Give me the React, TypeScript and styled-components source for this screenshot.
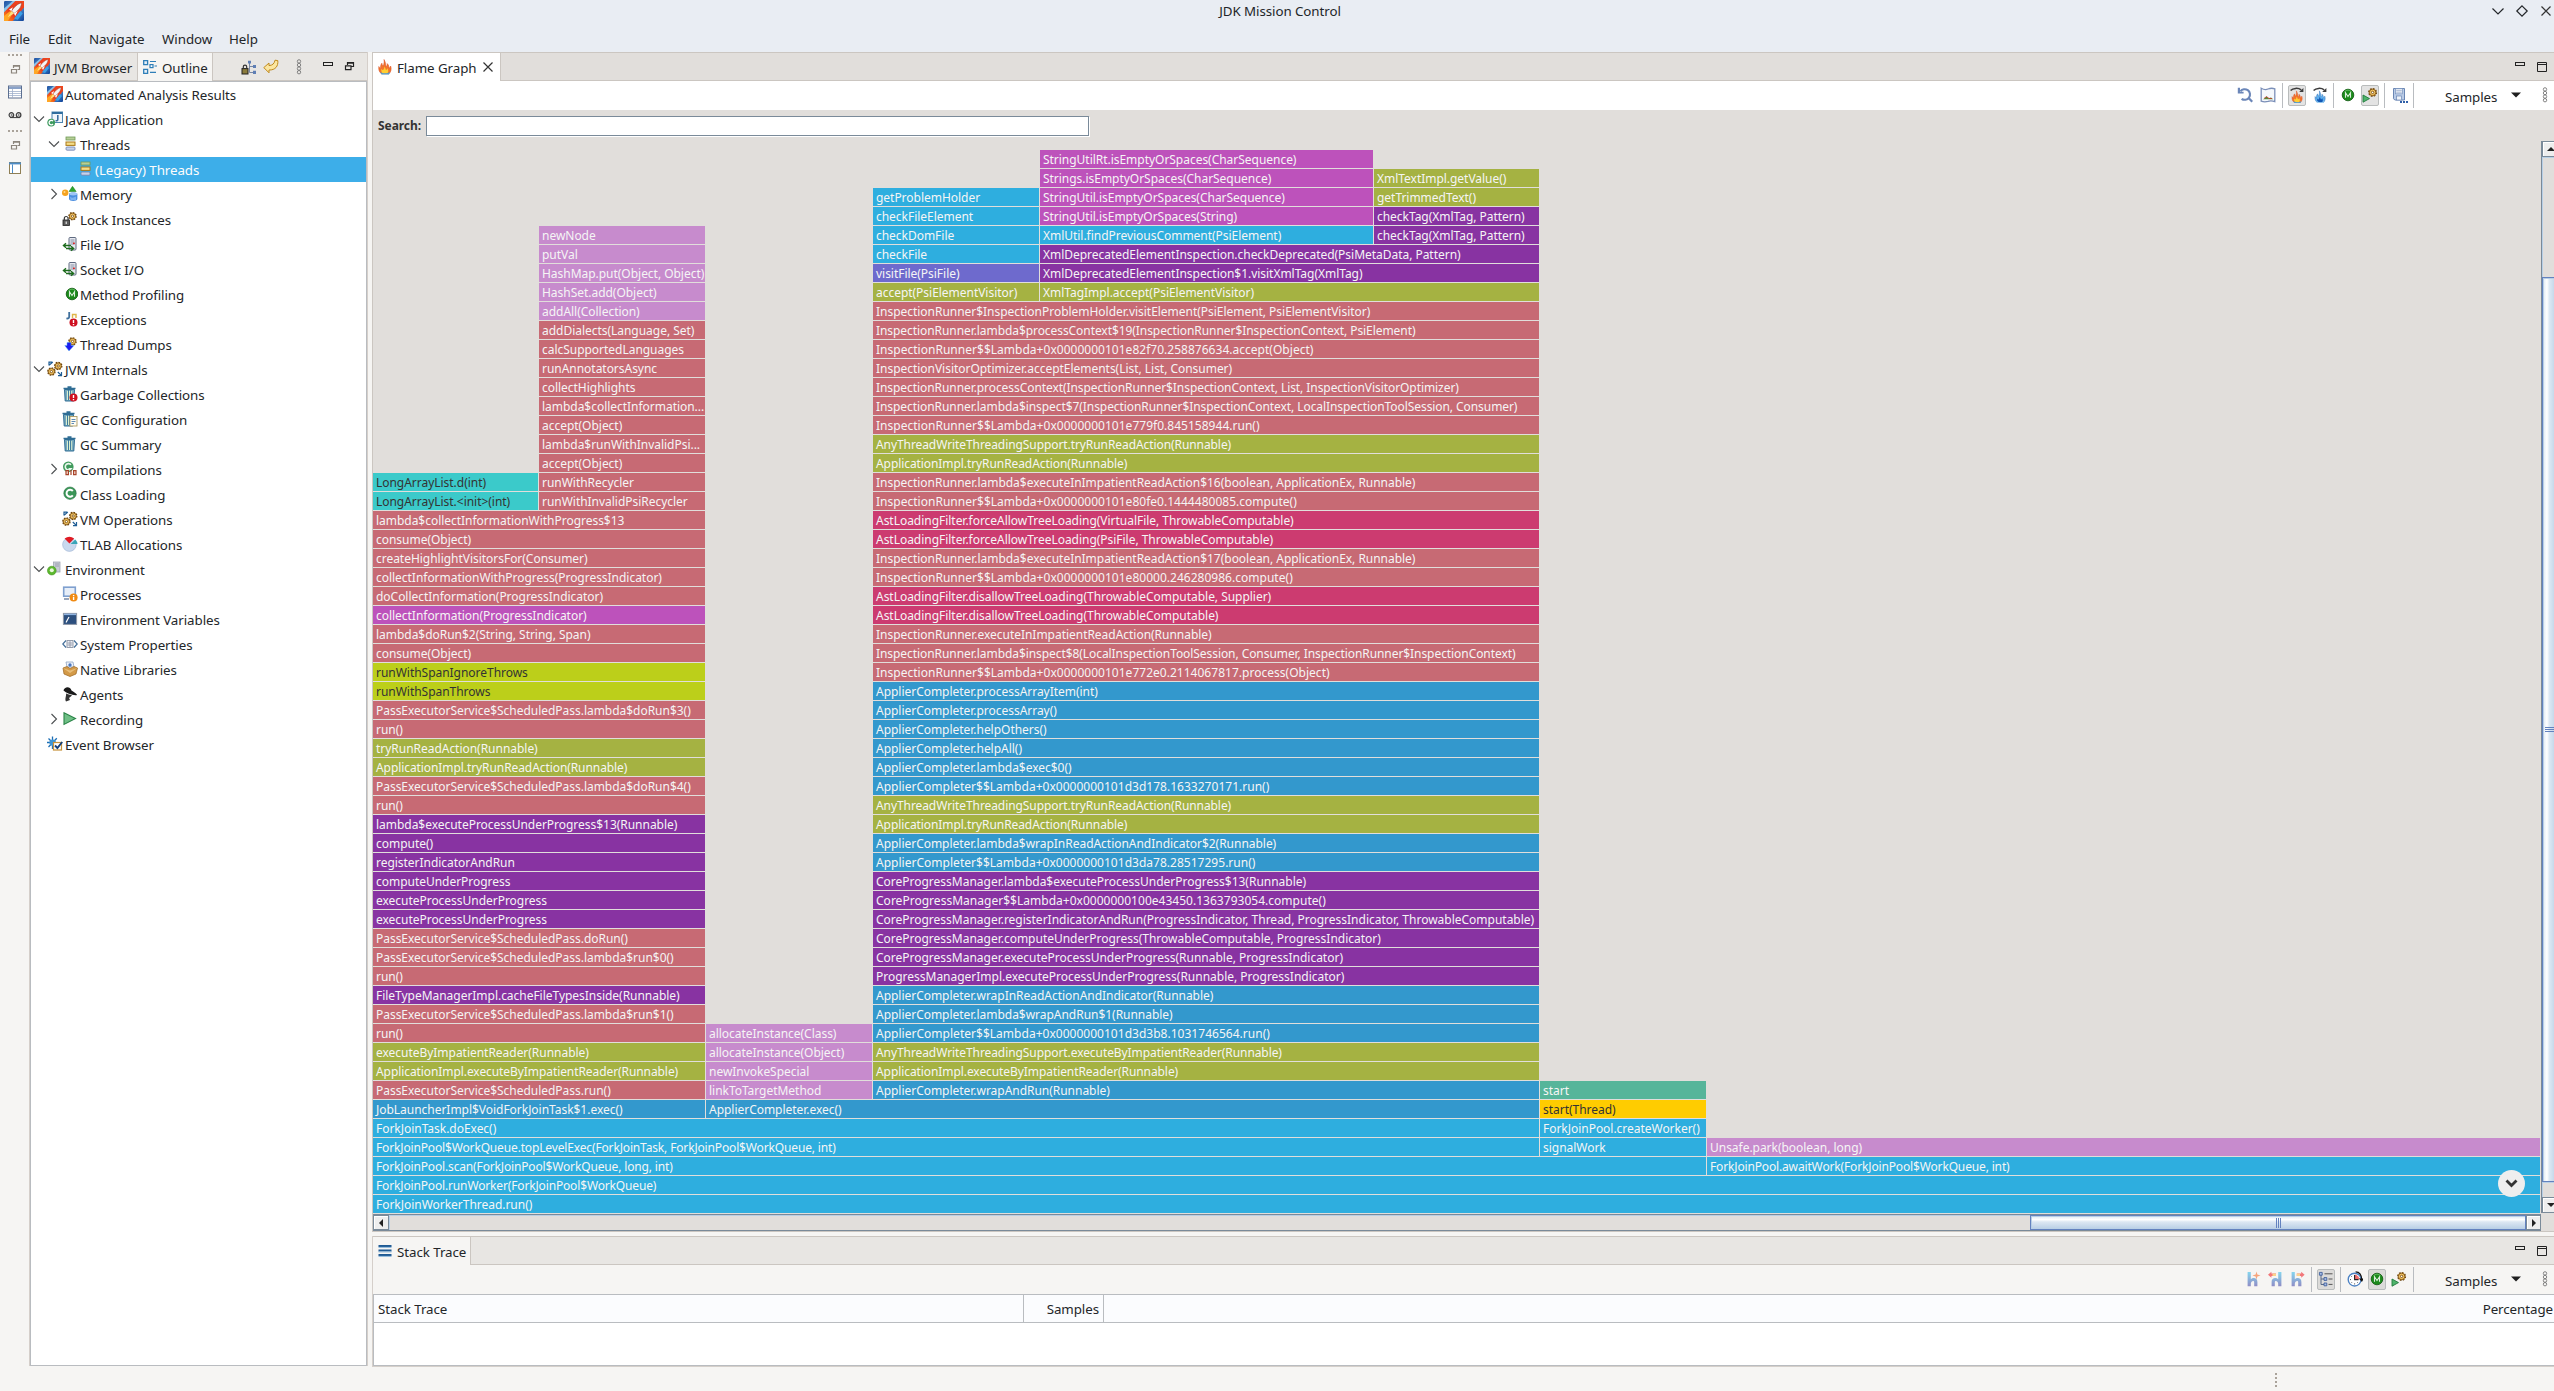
import React from "react";
import styled, { createGlobalStyle } from "styled-components";

const GlobalStyle = createGlobalStyle`
  * { box-sizing: border-box; }
  html, body { margin: 0; padding: 0; overflow: hidden; background: #f6f5f3; }
  body { font-family: "Noto Sans", "Open Sans", sans-serif; font-size: 13.33px; letter-spacing: -0.06px; color: #232629; }
`;

/* ---------- icons ---------- */

const Rocket = () => (
  <>
    <defs>
      <linearGradient id="sky" x1="0" y1="0" x2="1" y2="1">
        <stop offset="0" stopColor="#1d4fa0" />
        <stop offset="0.5" stopColor="#5aa0dc" />
        <stop offset="1" stopColor="#0d3f96" />
      </linearGradient>
      <linearGradient id="blaze" x1="1" y1="0" x2="0" y2="1">
        <stop offset="0" stopColor="#f0481e" />
        <stop offset="0.6" stopColor="#e8381c" />
        <stop offset="1" stopColor="#ff9c1c" />
      </linearGradient>
    </defs>
    <rect x="0" y="0" width="16" height="16" rx="1" fill="url(#sky)" />
    <path d="M7 0H16V5L10 13L7 16H0V9Z" fill="url(#blaze)" />
    <path d="M0 6L7 0H9L0 9Z" fill="#8cc4ea" />
    <path d="M0 12L5 8L7 10L3 16H0Z" fill="#ffa726" />
    <path d="M8 14L13 8L15 10L11 15Z" fill="#3aa0e8" />
    <path d="M14 1.5C11 2 8 5 6 8L8 10C11 8 14 5 14 1.5Z" fill="#f4f4f4" stroke="#8a3a30" strokeWidth="0.4" />
    <path d="M4 7L7 5L6 8ZM9 12L11 8L8 10Z" fill="#fff" />
    <path d="M6 8L8 10L3 13Z" fill="#ffe082" />
  </>
);

const Gear = ({ x, y, s = 1 }: { x: number; y: number; s?: number }) => (
  <g transform={`translate(${x} ${y}) scale(${s})`}>
    <circle r="3.6" fill="#f0b848" stroke="#6b430d" strokeWidth="1.8" strokeDasharray="1.6 1.2" />
    <circle r="3.2" fill="#f5c866" stroke="#7a4d10" strokeWidth="0.8" />
    <circle r="1.2" fill="#fff" stroke="#7a4d10" strokeWidth="0.9" />
  </g>
);

const Bin = ({ x = 0 }: { x?: number }) => (
  <g transform={`translate(${x} 0)`}>
    <path d="M2.5 3.5H12.5L11.8 15H3.2Z" fill="#77a9bd" stroke="#2f6d94" />
    <path d="M5.5 5V14M7.5 5V14M9.6 5V14" stroke="#d9efd0" strokeWidth="1" />
    <path d="M6.5 4V14M8.6 4V14" stroke="#2f6d94" strokeWidth="0.8" />
    <path d="M1.5 2.5H13.5M5.5 1H9.5" stroke="#2f6d94" strokeWidth="1.5" />
  </g>
);

const Alert = () => (
  <>
    <circle cx="11.5" cy="11.5" r="4" fill="#cf1020" />
    <path d="M11.5 9V12M11.5 13V14.2" stroke="#fff" strokeWidth="1.4" />
  </>
);

const Stack = () => (
  <>
    <rect x="4" y="1" width="9" height="3" fill="#b7cf97" stroke="#6f9a57" strokeWidth="0.8" />
    <rect x="4" y="6" width="9" height="3.4" fill="#f4dc86" stroke="#a9791a" strokeWidth="1" />
    <rect x="4" y="11" width="9" height="3.2" rx="1" fill="#c6d2ea" stroke="#6c80ae" strokeWidth="0.8" />
  </>
);

const GreenM = ({ cx = 8 }: { cx?: number }) => (
  <>
    <circle cx={cx} cy="8" r="5.8" fill="#1b8a1b" stroke="#0d560d" strokeWidth="0.8" />
    <path d={`M${cx - 3.5} 4.8A4.6 4.6 0 0 1 ${cx + 3.5} 4.8`} stroke="#58b858" strokeWidth="1" fill="none" />
    <path d={`M${cx - 2.5} 10.8V5.8L${cx} 9.6L${cx + 2.5} 5.8V10.8`} stroke="#dcefdc" strokeWidth="1.1" fill="none" />
  </>
);

const Server = () => (
  <>
    <rect x="7" y="1.5" width="7" height="12.5" rx="1" fill="#e6e8ef" stroke="#5f6a80" />
    <path d="M8.5 4H12.5M8.5 6H12.5M8.5 8H12.5" stroke="#7d879d" strokeWidth="0.9" />
    <rect x="11" y="6.6" width="1.8" height="1.5" fill="#e02020" />
    <path d="M1.5 9.5H9M4 7.2L1.4 9.5L4 11.8" stroke="#1d6b1d" strokeWidth="1.3" fill="none" />
    <path d="M4 12.5H11.5M9 10.2L11.7 12.5L9 14.8" stroke="#1d6b1d" strokeWidth="1.3" fill="none" />
  </>
);

const Flame = ({ cool = false }: { cool?: boolean }) => (
  <>
    <path
      d="M7 0.5C9 4 8.4 5.5 9.2 7.5C10.2 6.8 10.4 5.6 10.2 4.6C12 6.3 11.8 7.8 12.1 9C13 8.6 13.4 8 13.6 7C14.8 9.5 14 13 12 14.8H4.6C2.2 13.5 1.4 10.5 1.8 7.5C2.4 8.6 2.9 9.2 3.6 9.4C3.4 7 3.8 5.4 4.9 4.2C5 5.4 5.4 6.4 6.2 7.1C7 5 7.4 3 7 0.5Z"
      fill={cool ? "#5fb0ee" : "#f2742c"}
      stroke={cool ? "#1f62b0" : "#d9481c"}
      strokeWidth="0.5"
    />
    <path
      d="M7.4 7.5C8.4 9 8.6 10.3 9 11.2C9.8 10.6 10.2 10 10.3 9.2C11.8 11 11.4 13.3 10.3 14.6H5.8C4.2 13.3 4 11 4.6 9.8C5 10.6 5.4 11 6 11.2C7 10 7.4 8.8 7.4 7.5Z"
      fill={cool ? "#1257b4" : "#ffcf33"}
    />
    <path d="M3.2 13C5.5 14.8 10.8 14.8 13 12.8L12 15.4H4.6Z" fill={cool ? "#9fd0f2" : "#4fa0d4"} />
  </>
);

const SmallFlame = ({ cool = false }: { cool?: boolean }) => (
  <g transform="translate(1.6 3.4) scale(0.82)">
    <Flame cool={cool} />
  </g>
);

const FlipArrow = () => (
  <>
    <path d="M1.6 3.6C4 1 9 0.6 12.2 2.8" stroke="#3b3b3b" strokeWidth="1.5" fill="none" />
    <path d="M14.4 1V5H10.2Z" fill="#3b3b3b" />
  </>
);

const Play = () => <path d="M1 8L7.5 11.6L1 15.2Z" fill="#4fb46c" stroke="#217a3c" strokeWidth="0.9" />;

const Branch = ({ flip = false }: { flip?: boolean }) => (
  <g transform={flip ? "translate(16 0) scale(-1 1)" : undefined}>
    <defs>
      <linearGradient id="branchFill" x1="0" y1="0" x2="0" y2="1">
        <stop offset="0" stopColor="#86d6ee" />
        <stop offset="1" stopColor="#8f8dc6" />
      </linearGradient>
    </defs>
    <path d="M1.6 1H4.8V8.2C6.5 6.5 11.4 6 11.4 11V15.2H8.2V11.5C8.2 8.8 4.8 10 4.8 13V15.2H1.6Z" fill="url(#branchFill)" />
  </g>
);

const icons: Record<string, React.ReactNode> = {
  rocket: <Rocket />,
  javaApp: (
    <>
      <rect x="5" y="1" width="10.5" height="10.5" fill="#f0f5fa" stroke="#4d86b0" />
      <path d="M5 2H15.5" stroke="#2f6d9e" strokeWidth="2" />
      <path d="M10.8 4V8.5Q10.8 10 8.5 9.8" stroke="#3b6fa0" strokeWidth="1.6" fill="none" />
      <circle cx="4.2" cy="11.6" r="3.9" fill="#3d9a5f" />
      <path d="M6 10.2A2.2 2.2 0 1 0 6 13" stroke="#fff" strokeWidth="1.3" fill="none" />
    </>
  ),
  threads: <Stack />,
  memory: (
    <>
      <circle cx="3.2" cy="6.8" r="3.2" fill="#f5a31f" />
      <circle cx="2.5" cy="6" r="1" fill="#ffd890" />
      <path d="M10.5 0.3L14.2 5.5H7Z" fill="#2fa52f" stroke="#1a7a1a" strokeWidth="0.5" />
      <path d="M7 8C7 6 15.4 6 15.4 8V13C15.4 15.6 7 15.6 7 13Z" fill="#4b8ee0" />
      <ellipse cx="11.2" cy="8" rx="4" ry="1.4" fill="#9fc6f5" />
      <path d="M8 10.5C10 12.5 12 11.5 14 10.5V14H8.5Z" fill="#7db3f0" />
    </>
  ),
  lock: (
    <>
      <Gear x={10.5} y={5.2} s={0.95} />
      <rect x="1" y="9" width="6.5" height="5.5" fill="#5b5b5b" stroke="#222" strokeWidth="0.8" />
      <path d="M2.3 9V7.4A1.9 1.9 0 0 1 6.1 7.4V9" stroke="#333" strokeWidth="1.2" fill="none" />
      <path d="M4.2 10.5V13" stroke="#fff" />
    </>
  ),
  io: <Server />,
  method: <GreenM cx={10} />,
  exception: (
    <>
      <path d="M7.2 1V5.5Q7.2 8 4.4 7.4" stroke="#3f6f9c" strokeWidth="1.8" fill="none" />
      <path d="M10.5 7V3.5H14V7" stroke="#dfb64a" strokeWidth="1.4" fill="none" />
      <Alert />
    </>
  ),
  dump: (
    <>
      <Gear x={10.5} y={5.4} s={0.95} />
      <path d="M5 6.5H9V9.5H12L7 15L2.8 9.5H5Z" fill="#1c1cf0" stroke="#5ab0f0" strokeWidth="0.5" />
    </>
  ),
  gears: (
    <>
      <Gear x={11.2} y={5} s={0.95} />
      <Gear x={4.4} y={10.6} s={0.95} />
      <path d="M5.5 1.2H2V4.6M2 4.4L5.8 1M14.5 11V14.6H11M14.3 14.4L10.8 11" stroke="#1f5d95" strokeWidth="1.2" fill="none" />
    </>
  ),
  gc: (
    <>
      <Bin />
      <Alert />
    </>
  ),
  gcConf: (
    <>
      <Bin x={-1} />
      <rect x="8" y="5.5" width="7" height="9.5" fill="#fffdf2" stroke="#b09a60" strokeWidth="0.9" />
      <path d="M9.5 8.5H13.5M9.5 10.5H13.5M9.5 12.5H12" stroke="#5f89b5" />
    </>
  ),
  gcSum: <Bin />,
  compile: (
    <>
      <circle cx="6.3" cy="5.8" r="5.3" fill="#3f9a5c" />
      <path d="M9 3.8A3.2 3.2 0 1 0 9 7.8H6.5" stroke="#e9f6ec" strokeWidth="1.6" fill="none" />
      <path d="M4 9.6H6.4V13.6H4ZM9 9V14M11.6 9.6H14V13.6H11.6Z" stroke="#a8442a" strokeWidth="1.2" fill="#f6e2d8" />
    </>
  ),
  klass: (
    <>
      <circle cx="8" cy="7.2" r="6.2" fill="#3b9658" stroke="#2a7443" strokeWidth="0.6" />
      <path d="M10.8 5A3.5 3.5 0 1 0 10.8 9.4" stroke="#fff" strokeWidth="2" fill="none" />
    </>
  ),
  pie: (
    <>
      <circle cx="7.4" cy="8.6" r="6.8" fill="#c9d9ee" stroke="#9fb4d3" strokeWidth="0.6" />
      <path d="M7.4 7.6L2.6 2.6Q7.4 -1 12.2 2.6Z" fill="#e01b24" />
      <path d="M8.6 8L13.4 3.4Q15.5 5.8 15.6 8Z" fill="#3aa6b8" />
    </>
  ),
  env: (
    <>
      <rect x="6.5" y="1" width="6.5" height="10" fill="#c8ccd6" stroke="#a0a6b4" strokeWidth="0.8" />
      <path d="M8 3H12M8 5H12" stroke="#8f95a5" strokeWidth="0.8" />
      <circle cx="4.8" cy="9.6" r="4.4" fill="#5cb82e" stroke="#3c8a1b" strokeWidth="0.5" />
      <circle cx="4.8" cy="9.2" r="2" fill="#e9f8dd" />
    </>
  ),
  proc: (
    <>
      <rect x="1.7" y="1.2" width="11.6" height="9" fill="#e7eef8" stroke="#7fa0cf" strokeWidth="1.6" />
      <path d="M2 13H7" stroke="#7f8faa" strokeWidth="1.6" />
      <circle cx="11.6" cy="11.5" r="4" fill="#f08a12" />
      <path d="M11.6 9V10.2M11.6 11V14" stroke="#fff" strokeWidth="1.4" />
    </>
  ),
  term: (
    <>
      <rect x="1.4" y="2.4" width="13.2" height="11" fill="#2c4f7e" stroke="#8f98a8" />
      <path d="M2 3.4H14" stroke="#8fb3e0" strokeWidth="1.4" />
      <path d="M4 11.5L7 6" stroke="#fff" strokeWidth="1.2" />
    </>
  ),
  props: (
    <>
      <path d="M4 4.5L0.8 8L4 11.5M12 4.5L15.2 8L12 11.5" stroke="#46709a" strokeWidth="1.2" fill="none" />
      <rect x="5" y="4.5" width="6" height="7" fill="#eef1f6" stroke="#8a93a3" strokeWidth="0.9" />
      <path d="M8 5V11M5.5 7H10.5M5.5 9H10.5" stroke="#8a93a3" strokeWidth="0.8" />
    </>
  ),
  libs: (
    <>
      <path d="M4 1H11L12 6H5Z" fill="#f0f4fb" stroke="#8ea3c2" strokeWidth="0.8" />
      <circle cx="8" cy="4" r="1.7" fill="#4b78c0" />
      <path d="M1 7L5 5.5L8 7.5L12 5.5L15.5 7L14 13L8 15.5L2 13Z" fill="#d39a48" stroke="#9c6620" strokeWidth="0.7" />
      <path d="M1 7L8 9.5L15.5 7L8 12Z" fill="#e8bd78" />
    </>
  ),
  spy: (
    <>
      <path d="M1.5 4.5C2 1 8 -0.5 9.5 4.5C13 6.5 15 8 15 9C12 10 4 7 1.5 4.5Z" fill="#1a1a1a" />
      <path d="M4 7.5C7 8.5 9 9 10 9.5L7 12L8 14L4 15.5C2.5 12.5 4.5 10.5 4 7.5Z" fill="#333" />
    </>
  ),
  play: <path d="M2 1.8L13.5 7.6L2 13.4Z" fill="#6fbf86" stroke="#2a8447" strokeWidth="1.1" />,
  event: (
    <>
      <path d="M5.5 0.5V13M0 6.5H9M1.5 2.5L9.5 10.5M9.8 2.2L1.5 11" stroke="#1e6fb5" strokeWidth="1.3" />
      <circle cx="5.6" cy="6.6" r="3.2" fill="#3d95d6" />
      <rect x="6.5" y="6.5" width="8" height="7.5" fill="#fff" stroke="#c7923a" strokeWidth="1.2" />
      <path d="M8 9.5L10.4 12L15.2 6" stroke="#153f7a" strokeWidth="1.9" fill="none" />
    </>
  ),
  outline: (
    <>
      <path d="M1.7 1.7H5.6V5.6H1.7ZM1.7 10.4H5.6V14.3H1.7Z" fill="#e6f0f8" stroke="#2f7fb8" strokeWidth="1.3" />
      <path d="M8 2.5H14M8 13.4H14M12.5 7H15" stroke="#2f7fb8" strokeWidth="1.2" />
      <rect x="8" y="5.6" width="3" height="3" fill="#fff" stroke="#2f7fb8" strokeWidth="1.2" />
    </>
  ),
  lockTree: (
    <>
      <path d="M8.5 2V12.5H12M8.5 6.5H12" stroke="#7787a5" strokeWidth="1" fill="none" />
      <path d="M7 0.8H10V3.4H7ZM12 5H15V8H12ZM12 10.8H15V14H12Z" fill="#5f7fb5" />
      <rect x="1" y="8.6" width="6" height="5.4" fill="#8a7b3c" stroke="#222" strokeWidth="1" />
      <path d="M2.3 8.4V6.8A1.7 1.7 0 0 1 5.7 6.8V8.4" stroke="#333" strokeWidth="1.2" fill="none" />
    </>
  ),
  back: (
    <path
      d="M0.8 8.6L6 4V6.6C9.5 6.4 11.4 4.6 12 1.2L14.8 1.6C15.4 7 12.5 11.2 6 11V13.8Z"
      fill="#fbe6a0"
      stroke="#c08a1c"
      strokeWidth="1"
    />
  ),
  dots: (
    <g fill="none" stroke="#777" strokeWidth="0.9">
      <circle cx="8" cy="2.4" r="1.7" />
      <circle cx="8" cy="6" r="1.7" />
      <circle cx="8" cy="9.6" r="1.7" />
      <circle cx="8" cy="13.2" r="1.7" />
    </g>
  ),
  min: <rect x="3.5" y="3.5" width="9" height="3" fill="none" stroke="#222" />,
  max: <path d="M3.5 3.5H12.5V12.5H3.5ZM3.5 5.5H12.5" fill="none" stroke="#222" />,
  restore: <path d="M6.5 6V3.5H12.5V7.5H10.5M6.5 4.2H12.5M4.5 6.8H10V10.6H4.5Z" fill="none" stroke="#222" strokeWidth="1.2" />,
  restoreDim: <path d="M6.5 6V3.5H12.5V7.5H10.5M6.5 4.2H12.5M4.5 7.5H9.5V11H4.5Z" fill="none" stroke="#8c857c" strokeWidth="1.2" />,
  tableView: (
    <>
      <rect x="1.5" y="2" width="13" height="12" fill="#fff" stroke="#5c6f90" />
      <path d="M2 3.8H14" stroke="#8aa2c8" strokeWidth="2.4" />
      <path d="M5.5 5V14M2 7.5H14M2 9.5H14M2 11.5H14" stroke="#9fb0cc" strokeWidth="0.8" />
    </>
  ),
  glasses: (
    <>
      <circle cx="4.4" cy="8" r="2.3" fill="#ddd" stroke="#3d3d3d" strokeWidth="1.2" />
      <circle cx="11.6" cy="8" r="2.3" fill="#ddd" stroke="#3d3d3d" strokeWidth="1.2" />
      <path d="M3 10.6H13" stroke="#3d3d3d" />
      <path d="M4 8H5.4M11 8H12.4" stroke="#3d3d3d" />
    </>
  ),
  sideView: (
    <>
      <rect x="2.5" y="2.5" width="11" height="11" fill="#fff" stroke="#8f7f55" />
      <path d="M2 3.4H14" stroke="#4d8cc6" strokeWidth="2" />
      <path d="M5.5 4.4V13" stroke="#4d8cc6" />
    </>
  ),
  flame: <Flame />,
  undo: (
    <>
      <path d="M3.4 4.4A5.3 5.3 0 1 1 4.6 11.8" stroke="#6b86b8" strokeWidth="2.1" fill="none" />
      <path d="M0.8 0.8V6.6H6.6V4.8H3V0.8Z" fill="#6b86b8" />
      <path d="M11.4 10.8L15.2 14.8" stroke="#6b86b8" strokeWidth="2.2" />
    </>
  ),
  map: (
    <>
      <path d="M1.2 1.2Q5 3.4 8 2Q11.5 0.6 14.8 1.8V14.6Q11 13.2 8 14.4Q4.5 15.4 1.2 14.2Z" fill="#f5f8fc" stroke="#7b8fb8" strokeWidth="1.3" />
      <path d="M3 12.2H13.2L11 10.6L8.5 11.2L6.5 9.4L5 11Z" fill="#4f8a3c" />
      <path d="M4 11.5L6.5 9.6L9 11.5H12" stroke="#c0442a" strokeWidth="0.9" fill="none" />
    </>
  ),
  flameUp: (
    <>
      <SmallFlame />
      <FlipArrow />
    </>
  ),
  flameDown: (
    <>
      <SmallFlame cool />
      <FlipArrow />
    </>
  ),
  greenM: <GreenM />,
  playGear: (
    <>
      <Play />
      <Gear x={10.6} y={5.4} s={1} />
    </>
  ),
  save: (
    <>
      <path d="M1.5 1.5H12.5V13H2.8L1.5 11.7Z" fill="#b9cbe6" stroke="#6a86b4" />
      <rect x="3.6" y="1.8" width="6.8" height="5" fill="#f3f6fb" stroke="#7b95bf" strokeWidth="0.7" />
      <path d="M4.2 3.6H9.8M4.2 5.2H9.8" stroke="#8fa3c4" strokeWidth="0.7" />
      <rect x="4.6" y="9" width="5" height="4" fill="#eef2f8" stroke="#6a86b4" strokeWidth="0.7" />
      <path d="M8 15H10M11 15H13M14 15H16" stroke="#2f5fa8" strokeWidth="1.8" />
    </>
  ),
  branchNew: (
    <>
      <Branch />
      <path d="M10.5 0.5L11.4 3.6L14.6 4.5L11.4 5.4L10.5 8.5L9.6 5.4L6.4 4.5L9.6 3.6Z" fill="#f7a57c" />
    </>
  ),
  branchLeft: (
    <>
      <Branch flip />
      <path d="M1 3.8L4.4 0.8V2.6H9V5H4.4V6.8Z" fill="#f2777a" />
      <path d="M5.5 2.6H9V5H5.5Z" fill="#fbd38a" />
    </>
  ),
  branchRight: (
    <>
      <Branch />
      <path d="M14.6 3.8L11.2 0.8V2.6H6.8V5H11.2V6.8Z" fill="#f2777a" />
      <path d="M6.8 2.6H10V5H6.8Z" fill="#fbd38a" />
    </>
  ),
  treeView: (
    <>
      <path d="M3 4V13.5H6M3 8H6" stroke="#5b6b88" fill="none" />
      <path d="M1.4 1.4H4.2V4.2H1.4ZM6 6.6H8.8V9.4H6ZM6 12H8.8V14.8H6Z" fill="#aac0e6" stroke="#3f5f9c" strokeWidth="0.9" />
      <path d="M6.5 2.8H14.5M10.5 8H14.5M10.5 13.4H14.5" stroke="#555" strokeWidth="1" />
    </>
  ),
  clock: (
    <>
      <circle cx="7.6" cy="8.6" r="6.4" fill="#fff" stroke="#4c82c4" strokeWidth="1.4" />
      <path d="M7.6 8.6V3.6A5 5 0 0 1 12.4 8.6Z" fill="#f26a6a" />
      <path d="M7.6 4V8.6H11.5" stroke="#222" strokeWidth="1.1" fill="none" />
      <path d="M7.6 13.4V12.4M3 8.6H4M4.4 5.4L5 6M4.4 11.8L5 11.2M10.8 11.8L10.2 11.2" stroke="#333" strokeWidth="0.9" />
      <path d="M8.6 0.8C12.5 0.8 14.6 4 14.8 9M12.6 7.4L14.8 10L16 7.6" stroke="#111" strokeWidth="1.2" fill="none" />
    </>
  ),
  lines: (
    <>
      <path d="M1.5 3H14.5M1.5 7.5H14.5M1.5 12H14.5" stroke="#1f5a94" strokeWidth="1.8" />
      <path d="M1.5 4.4H14.5M1.5 8.9H14.5M1.5 13.4H14.5" stroke="#8fb8da" strokeWidth="1" />
    </>
  ),
  caret: <path d="M3 5.5H13L8 10.6Z" fill="#1f1f1f" />,
  close: <path d="M3.5 3.5L12.5 12.5M12.5 3.5L3.5 12.5" stroke="#333" strokeWidth="1.2" fill="none" />,
  chevDown: <path d="M2.5 5.5L8 11L13.5 5.5" stroke="#232629" strokeWidth="1.2" fill="none" />,
  diamond: <path d="M8 2.8L13.2 8L8 13.2L2.8 8Z" stroke="#232629" strokeWidth="1.2" fill="none" />,
  open: <path d="M3 5.5L8 10.5L13 5.5" stroke="#4d5052" strokeWidth="1.1" fill="none" />,
  closed: <path d="M5.5 3L10.5 8L5.5 13" stroke="#4d5052" strokeWidth="1.1" fill="none" />,
};

const Svg = styled.svg`
  display: block;
  flex: none;
`;

const Icon = ({ name, size = 16 }: { name: string; size?: number }) => (
  <Svg width={size} height={size} viewBox="0 0 16 16">
    {icons[name]}
  </Svg>
);

/* ---------- window chrome ---------- */

const Window = styled.div`
  width: 2554px;
  height: 1391px;
  display: flex;
  flex-direction: column;
  overflow: hidden;
  background: #f6f5f3;
  white-space: nowrap;
`;

const TitleBar = styled.header`
  height: 25px;
  display: grid;
  grid-template-columns: 1fr auto 1fr;
  align-items: center;
  padding: 0 0 3px 4px;
  background: #e9edf3;
`;

const Title = styled.div`
  line-height: 20px;
  padding-left: 2px;
`;

const WindowButtons = styled.div`
  display: flex;
  justify-content: flex-end;
  gap: 8px;
`;

const MenuBar = styled.nav`
  height: 27px;
  display: flex;
  align-items: center;
  padding: 0 0 0 9px;
  background: #e9edf3;
`;

const MenuItem = styled.span<{ $w: number }>`
  width: ${(p) => p.$w}px;
  line-height: 26px;
`;

const Body = styled.div`
  flex: 1;
  display: flex;
  min-height: 0;
`;

const Rail = styled.aside`
  width: 29px;
  display: flex;
  flex-direction: column;
  align-items: center;
`;

const RailItem = styled.div<{ $mt?: number }>`
  margin-top: ${(p) => p.$mt ?? 0}px;
  padding-left: 1px;
`;

const Grip = styled.div<{ $mt: number }>`
  width: 14px;
  height: 2px;
  margin-top: ${(p) => p.$mt}px;
  background: repeating-linear-gradient(90deg, #aaa39a 0 2px, transparent 2px 4px);
`;

const Strip = styled.div<{ $bg: string }>`
  height: 29px;
  display: flex;
  background: ${(p) => p.$bg};
  border-top: 1px solid #cbc6c1;
  border-bottom: 1px solid #cbc6c1;
`;

const Tab = styled.div<{ $w: number; $bg?: string; $active?: boolean }>`
  width: ${(p) => p.$w}px;
  height: ${(p) => (p.$active ? 28 : 27)}px;
  flex: none;
  display: flex;
  align-items: center;
  gap: 4px;
  padding: 0 0 1px 4px;
  background: ${(p) => p.$bg ?? "transparent"};
  border-right: 1px solid #cbc6c1;
`;

const TabText = styled.span`
  line-height: 18px;
  padding-top: 3px;
`;

const StripTools = styled.div<{ $pr: number }>`
  margin-left: auto;
  display: flex;
  padding: 6px ${(p) => p.$pr}px 0 0;
`;

const Slot = styled.div<{ $ml?: number; $w?: number; $dy?: number }>`
  margin-left: ${(p) => p.$ml ?? 0}px;
  width: ${(p) => p.$w ?? 16}px;
  padding-top: ${(p) => p.$dy ?? 0}px;
  flex: none;
`;

/* ---------- outline tree ---------- */

const SidePanel = styled.section`
  width: 339px;
  height: 1314px;
  display: flex;
  flex-direction: column;
  border: solid #d5cfca;
  border-width: 0 1px;
`;

const Tree = styled.div`
  flex: 1;
  background: #fff;
  border: 1px solid #b9bcc0;
`;

const TreeRow = styled.div<{ $depth: number; $selected?: boolean }>`
  height: 25px;
  display: flex;
  align-items: center;
  padding: 0 0 1px ${(p) => p.$depth * 15}px;
  background: ${(p) => (p.$selected ? "#3daee9" : "transparent")};
  color: ${(p) => (p.$selected ? "#fcfcfc" : "#232629")};
`;

const Twisty = styled.span`
  width: 16px;
  height: 16px;
`;

const TreeLabel = styled.span`
  margin-left: 2px;
  line-height: 22px;
  padding-top: 2px;
`;

type TreeItem = [depth: number, icon: string, label: string, state?: "open" | "closed" | "selected"];

const treeItems: TreeItem[] = [
  [0, "rocket", "Automated Analysis Results"],
  [0, "javaApp", "Java Application", "open"],
  [1, "threads", "Threads", "open"],
  [2, "threads", "(Legacy) Threads", "selected"],
  [1, "memory", "Memory", "closed"],
  [1, "lock", "Lock Instances"],
  [1, "io", "File I/O"],
  [1, "io", "Socket I/O"],
  [1, "method", "Method Profiling"],
  [1, "exception", "Exceptions"],
  [1, "dump", "Thread Dumps"],
  [0, "gears", "JVM Internals", "open"],
  [1, "gc", "Garbage Collections"],
  [1, "gcConf", "GC Configuration"],
  [1, "gcSum", "GC Summary"],
  [1, "compile", "Compilations", "closed"],
  [1, "klass", "Class Loading"],
  [1, "gears", "VM Operations"],
  [1, "pie", "TLAB Allocations"],
  [0, "env", "Environment", "open"],
  [1, "proc", "Processes"],
  [1, "term", "Environment Variables"],
  [1, "props", "System Properties"],
  [1, "libs", "Native Libraries"],
  [1, "spy", "Agents"],
  [1, "play", "Recording", "closed"],
  [0, "event", "Event Browser"],
];

/* ---------- editor area ---------- */

const Main = styled.main`
  margin-left: 4px;
  width: 2182px;
  flex: none;
  display: flex;
  flex-direction: column;
`;

const EditorPanel = styled.section`
  height: 1180px;
  display: flex;
  flex-direction: column;
  border-left: 1px solid #cbc6c1;
  border-bottom: 1px solid #cbc6c1;
`;

const ToolBar = styled.div<{ $bg: string }>`
  height: 29px;
  display: flex;
  align-items: center;
  justify-content: flex-end;
  padding-bottom: 1px;
  background: ${(p) => p.$bg};
`;

const Sep = styled.div<{ $ml: number }>`
  width: 1px;
  height: 25px;
  margin-left: ${(p) => p.$ml}px;
  background: #b9bcc0;
`;

const ToggleButton = styled.div<{ $ml: number; $bg: string }>`
  width: 18px;
  height: 21px;
  margin-left: ${(p) => p.$ml}px;
  display: flex;
  align-items: center;
  justify-content: center;
  background: ${(p) => p.$bg};
  border: 1px solid #b9bcbc;
  border-radius: 2px;
`;

const ToolText = styled.span<{ $ml: number }>`
  width: 51px;
  margin-left: ${(p) => p.$ml}px;
  padding-top: 3px;
  line-height: 18px;
`;

const FlameView = styled.div`
  flex: 1;
  display: flex;
  flex-direction: column;
  background: #e1dedb;
  min-height: 0;
`;

const SearchRow = styled.div`
  height: 31px;
  display: flex;
  align-items: center;
  padding-left: 5px;
`;

const SearchLabel = styled.label`
  width: 48px;
  font-size: 12px;
  font-weight: 700;
  color: #333;
`;

const SearchField = styled.input`
  width: 663px;
  height: 20px;
  padding: 0;
  background: #fff;
  border: 1px solid #7a8a99;
  border-radius: 0;
  box-shadow: 1px 1px 0 #fff;
  outline: none;
`;

const ScrollPane = styled.div`
  display: grid;
  grid-template-columns: 2168px 13px;
  grid-template-rows: 1072px 17px;
  row-gap: 1px;
  overflow: hidden;
`;

const Viewport = styled.div`
  position: relative;
  padding-top: 9px;
  height: 1072px;
`;

const FlameGrid = styled.div`
  display: grid;
  grid-template-columns: 166px 167px 167px 167px 166px 168px 166px 167px 834px;
  grid-template-rows: repeat(56, 19px);
`;

const Frame = styled.div<{ $row: number; $from: number; $to: number; $bg: string; $dark?: boolean; $track: number }>`
  grid-row: ${(p) => p.$row + 1};
  grid-column: ${(p) => p.$from + 1} / ${(p) => p.$to + 1};
  margin: 0 1px 1px 0;
  padding-left: 3px;
  overflow: hidden;
  background: ${(p) => p.$bg};
  color: ${(p) => (p.$dark ? "#333333" : "#f5f5f5")};
  font-size: 12px;
  line-height: 19px;
  letter-spacing: ${(p) => p.$track}px;
`;

const ScrollHint = styled.div`
  position: absolute;
  right: 16px;
  bottom: 16px;
  width: 27px;
  height: 27px;
  border-radius: 50%;
  background: #eeeeee;
  display: flex;
  align-items: center;
  justify-content: center;
`;

const VBar = styled.div`
  display: flex;
  flex-direction: column;
  border-left: 1px solid #7a8a99;
  width: 17px;
`;

const HBar = styled.div`
  display: flex;
  border: solid #7a8a99;
  border-width: 1px 0;
`;

const ArrowButton = styled.div<{ $w: number; $h: number }>`
  flex: none;
  width: ${(p) => p.$w}px;
  height: ${(p) => p.$h}px;
  display: flex;
  align-items: center;
  justify-content: center;
  background: #eeeeee;
  border: 1px solid #7a8a99;
  box-shadow: inset 1px 1px 0 #fff;
`;

const Track = styled.div<{ $len: number; $vertical?: boolean }>`
  flex: none;
  ${(p) => (p.$vertical ? `height: ${p.$len}px` : `width: ${p.$len}px`)};
  box-shadow: inset 1px 1px 0 #b8cfe5;
`;

const Thumb = styled.div<{ $len: number; $vertical?: boolean }>`
  flex: none;
  display: flex;
  align-items: center;
  justify-content: center;
  flex-direction: ${(p) => (p.$vertical ? "column" : "row")};
  gap: 1px;
  ${(p) => (p.$vertical ? `height: ${p.$len}px` : `width: ${p.$len}px`)};
  border: 1px solid #6382bf;
  box-shadow: inset 1px 1px 0 #b8cfe5;
  background: linear-gradient(${(p) => (p.$vertical ? "90deg" : "180deg")}, #dde8f3 0%, #ffffff 28%, #dde8f3 45%, #b8cfe5 100%);
  i {
    ${(p) => (p.$vertical ? "width: 10px; height: 1px;" : "width: 1px; height: 10px;")}
    background: #6382bf;
  }
`;

const Tri = styled.svg`
  display: block;
`;

type FrameSpec = [row: number, label: string, bg: string];

const LAV = "#c78bcd";
const RED = "#c76a74";
const TEAL = "#3bcaca";
const OLIVE = "#a5b242";
const LIME = "#bccf1a";
const PURPLE = "#8833a2";
const MAG = "#bd52bb";
const PINK = "#cc3b70";
const SKY = "#2eaedf";
const BLUE = "#3398cd";
const INDIGO = "#6e6acd";
const GREEN = "#56b59a";
const YELLOW = "#ffcc00";

const run = (start: number, entries: [string, string][]): FrameSpec[] =>
  entries.map(([label, bg], i) => [start + i, label, bg]);

const columns: { from: number; to: number; frames: FrameSpec[] }[] = [
  {
    from: 0,
    to: 1,
    frames: run(17, [
      ["LongArrayList.d(int)", TEAL],
      ["LongArrayList.<init>(int)", TEAL],
    ]),
  },
  {
    from: 1,
    to: 2,
    frames: run(4, [
      ["newNode", LAV],
      ["putVal", LAV],
      ["HashMap.put(Object, Object)", LAV],
      ["HashSet.add(Object)", LAV],
      ["addAll(Collection)", LAV],
      ["addDialects(Language, Set)", RED],
      ["calcSupportedLanguages", RED],
      ["runAnnotatorsAsync", RED],
      ["collectHighlights", RED],
      ["lambda$collectInformation...", RED],
      ["accept(Object)", RED],
      ["lambda$runWithInvalidPsi...", RED],
      ["accept(Object)", RED],
      ["runWithRecycler", RED],
      ["runWithInvalidPsiRecycler", RED],
    ]),
  },
  {
    from: 0,
    to: 2,
    frames: run(19, [
      ["lambda$collectInformationWithProgress$13", RED],
      ["consume(Object)", RED],
      ["createHighlightVisitorsFor(Consumer)", RED],
      ["collectInformationWithProgress(ProgressIndicator)", RED],
      ["doCollectInformation(ProgressIndicator)", RED],
      ["collectInformation(ProgressIndicator)", MAG],
      ["lambda$doRun$2(String, String, Span)", RED],
      ["consume(Object)", RED],
      ["runWithSpanIgnoreThrows", LIME],
      ["runWithSpanThrows", LIME],
      ["PassExecutorService$ScheduledPass.lambda$doRun$3()", RED],
      ["run()", RED],
      ["tryRunReadAction(Runnable)", OLIVE],
      ["ApplicationImpl.tryRunReadAction(Runnable)", OLIVE],
      ["PassExecutorService$ScheduledPass.lambda$doRun$4()", RED],
      ["run()", RED],
      ["lambda$executeProcessUnderProgress$13(Runnable)", PURPLE],
      ["compute()", PURPLE],
      ["registerIndicatorAndRun", PURPLE],
      ["computeUnderProgress", PURPLE],
      ["executeProcessUnderProgress", PURPLE],
      ["executeProcessUnderProgress", PURPLE],
      ["PassExecutorService$ScheduledPass.doRun()", RED],
      ["PassExecutorService$ScheduledPass.lambda$run$0()", RED],
      ["run()", RED],
      ["FileTypeManagerImpl.cacheFileTypesInside(Runnable)", PURPLE],
      ["PassExecutorService$ScheduledPass.lambda$run$1()", RED],
      ["run()", RED],
      ["executeByImpatientReader(Runnable)", OLIVE],
      ["ApplicationImpl.executeByImpatientReader(Runnable)", OLIVE],
      ["PassExecutorService$ScheduledPass.run()", RED],
      ["JobLauncherImpl$VoidForkJoinTask$1.exec()", BLUE],
    ]),
  },
  {
    from: 2,
    to: 3,
    frames: run(46, [
      ["allocateInstance(Class)", LAV],
      ["allocateInstance(Object)", LAV],
      ["newInvokeSpecial", LAV],
      ["linkToTargetMethod", LAV],
    ]),
  },
  { from: 2, to: 7, frames: [[50, "ApplierCompleter.exec()", BLUE]] },
  {
    from: 3,
    to: 4,
    frames: run(2, [
      ["getProblemHolder", SKY],
      ["checkFileElement", SKY],
      ["checkDomFile", SKY],
      ["checkFile", SKY],
      ["visitFile(PsiFile)", INDIGO],
      ["accept(PsiElementVisitor)", OLIVE],
    ]),
  },
  {
    from: 4,
    to: 6,
    frames: run(0, [
      ["StringUtilRt.isEmptyOrSpaces(CharSequence)", MAG],
      ["Strings.isEmptyOrSpaces(CharSequence)", MAG],
      ["StringUtil.isEmptyOrSpaces(CharSequence)", MAG],
      ["StringUtil.isEmptyOrSpaces(String)", MAG],
      ["XmlUtil.findPreviousComment(PsiElement)", SKY],
    ]),
  },
  {
    from: 6,
    to: 7,
    frames: run(1, [
      ["XmlTextImpl.getValue()", OLIVE],
      ["getTrimmedText()", OLIVE],
      ["checkTag(XmlTag, Pattern)", PURPLE],
      ["checkTag(XmlTag, Pattern)", PURPLE],
    ]),
  },
  {
    from: 4,
    to: 7,
    frames: run(5, [
      ["XmlDeprecatedElementInspection.checkDeprecated(PsiMetaData, Pattern)", PURPLE],
      ["XmlDeprecatedElementInspection$1.visitXmlTag(XmlTag)", PURPLE],
      ["XmlTagImpl.accept(PsiElementVisitor)", OLIVE],
    ]),
  },
  {
    from: 3,
    to: 7,
    frames: run(8, [
      ["InspectionRunner$InspectionProblemHolder.visitElement(PsiElement, PsiElementVisitor)", RED],
      ["InspectionRunner.lambda$processContext$19(InspectionRunner$InspectionContext, PsiElement)", RED],
      ["InspectionRunner$$Lambda+0x0000000101e82f70.258876634.accept(Object)", RED],
      ["InspectionVisitorOptimizer.acceptElements(List, List, Consumer)", RED],
      ["InspectionRunner.processContext(InspectionRunner$InspectionContext, List, InspectionVisitorOptimizer)", RED],
      ["InspectionRunner.lambda$inspect$7(InspectionRunner$InspectionContext, LocalInspectionToolSession, Consumer)", RED],
      ["InspectionRunner$$Lambda+0x0000000101e779f0.845158944.run()", RED],
      ["AnyThreadWriteThreadingSupport.tryRunReadAction(Runnable)", OLIVE],
      ["ApplicationImpl.tryRunReadAction(Runnable)", OLIVE],
      ["InspectionRunner.lambda$executeInImpatientReadAction$16(boolean, ApplicationEx, Runnable)", RED],
      ["InspectionRunner$$Lambda+0x0000000101e80fe0.1444480085.compute()", RED],
      ["AstLoadingFilter.forceAllowTreeLoading(VirtualFile, ThrowableComputable)", PINK],
      ["AstLoadingFilter.forceAllowTreeLoading(PsiFile, ThrowableComputable)", PINK],
      ["InspectionRunner.lambda$executeInImpatientReadAction$17(boolean, ApplicationEx, Runnable)", RED],
      ["InspectionRunner$$Lambda+0x0000000101e80000.246280986.compute()", RED],
      ["AstLoadingFilter.disallowTreeLoading(ThrowableComputable, Supplier)", PINK],
      ["AstLoadingFilter.disallowTreeLoading(ThrowableComputable)", PINK],
      ["InspectionRunner.executeInImpatientReadAction(Runnable)", RED],
      ["InspectionRunner.lambda$inspect$8(LocalInspectionToolSession, Consumer, InspectionRunner$InspectionContext)", RED],
      ["InspectionRunner$$Lambda+0x0000000101e772e0.2114067817.process(Object)", RED],
      ["ApplierCompleter.processArrayItem(int)", BLUE],
      ["ApplierCompleter.processArray()", BLUE],
      ["ApplierCompleter.helpOthers()", BLUE],
      ["ApplierCompleter.helpAll()", BLUE],
      ["ApplierCompleter.lambda$exec$0()", BLUE],
      ["ApplierCompleter$$Lambda+0x0000000101d3d178.1633270171.run()", BLUE],
      ["AnyThreadWriteThreadingSupport.tryRunReadAction(Runnable)", OLIVE],
      ["ApplicationImpl.tryRunReadAction(Runnable)", OLIVE],
      ["ApplierCompleter.lambda$wrapInReadActionAndIndicator$2(Runnable)", BLUE],
      ["ApplierCompleter$$Lambda+0x0000000101d3da78.28517295.run()", BLUE],
      ["CoreProgressManager.lambda$executeProcessUnderProgress$13(Runnable)", PURPLE],
      ["CoreProgressManager$$Lambda+0x0000000100e43450.1363793054.compute()", PURPLE],
      ["CoreProgressManager.registerIndicatorAndRun(ProgressIndicator, Thread, ProgressIndicator, ThrowableComputable)", PURPLE],
      ["CoreProgressManager.computeUnderProgress(ThrowableComputable, ProgressIndicator)", PURPLE],
      ["CoreProgressManager.executeProcessUnderProgress(Runnable, ProgressIndicator)", PURPLE],
      ["ProgressManagerImpl.executeProcessUnderProgress(Runnable, ProgressIndicator)", PURPLE],
      ["ApplierCompleter.wrapInReadActionAndIndicator(Runnable)", BLUE],
      ["ApplierCompleter.lambda$wrapAndRun$1(Runnable)", BLUE],
      ["ApplierCompleter$$Lambda+0x0000000101d3d3b8.1031746564.run()", BLUE],
      ["AnyThreadWriteThreadingSupport.executeByImpatientReader(Runnable)", OLIVE],
      ["ApplicationImpl.executeByImpatientReader(Runnable)", OLIVE],
      ["ApplierCompleter.wrapAndRun(Runnable)", BLUE],
    ]),
  },
  {
    from: 7,
    to: 8,
    frames: run(49, [
      ["start", GREEN],
      ["start(Thread)", YELLOW],
      ["ForkJoinPool.createWorker()", SKY],
      ["signalWork", SKY],
    ]),
  },
  {
    from: 0,
    to: 7,
    frames: run(51, [
      ["ForkJoinTask.doExec()", SKY],
      ["ForkJoinPool$WorkQueue.topLevelExec(ForkJoinTask, ForkJoinPool$WorkQueue, int)", SKY],
    ]),
  },
  { from: 0, to: 8, frames: [[53, "ForkJoinPool.scan(ForkJoinPool$WorkQueue, long, int)", SKY]] },
  {
    from: 8,
    to: 9,
    frames: run(52, [
      ["Unsafe.park(boolean, long)", LAV],
      ["ForkJoinPool.awaitWork(ForkJoinPool$WorkQueue, int)", SKY],
    ]),
  },
  {
    from: 0,
    to: 9,
    frames: run(54, [
      ["ForkJoinPool.runWorker(ForkJoinPool$WorkQueue)", SKY],
      ["ForkJoinWorkerThread.run()", SKY],
    ]),
  },
];

const darkText = new Set([TEAL, LIME, YELLOW]);

const tracking = (label: string) => {
  if (label.includes("+0x")) return 0.02;
  if (label.includes("WorkQueue")) return -0.15;
  if (label.startsWith("CoreProgress") || label.startsWith("ProgressManager")) return -0.01;
  if (label.startsWith("AnyThread") || label.startsWith("ApplicationImpl")) return -0.08;
  if (label.includes("InspectionContext")) return -0.07;
  return -0.03;
};

/* ---------- stack trace ---------- */

const TracePanel = styled.section`
  margin-top: 4px;
  height: 131px;
  display: flex;
  flex-direction: column;
  border-left: 1px solid #d5cfca;
  border-bottom: 1px solid #d5cfca;
`;

const Table = styled.div`
  flex: 1;
  display: flex;
  flex-direction: column;
  background: #fff;
  border: solid #b9bcc0;
  border-width: 1px 0 1px 1px;
`;

const TableHead = styled.div`
  height: 28px;
  display: grid;
  grid-template-columns: 650px 80px 1fr;
  background: #fbfcfe;
  border-bottom: 1px solid #b9bcc0;
`;

const HeadCell = styled.div<{ $right?: boolean; $last?: boolean }>`
  padding: 1px ${(p) => (p.$last ? 1 : 4)}px 0 4px;
  line-height: 26px;
  text-align: ${(p) => (p.$right ? "right" : "left")};
  border-right: ${(p) => (p.$last ? "none" : "1px solid #b9bcc0")};
`;

const StatusBar = styled.footer`
  flex: 1;
  padding: 6px 0 0 1903px;
`;

const StatusGrip = styled.div`
  width: 2px;
  height: 14px;
  background: repeating-linear-gradient(180deg, #aaa39a 0 2px, transparent 2px 4px);
`;

const App = () => (
  <Window>
    <GlobalStyle />
    <TitleBar>
      <Icon name="rocket" size={20} />
      <Title>JDK Mission Control</Title>
      <WindowButtons>
        <Icon name="chevDown" />
        <Icon name="diamond" />
        <Icon name="close" />
      </WindowButtons>
    </TitleBar>
    <MenuBar>
      <MenuItem $w={39}>File</MenuItem>
      <MenuItem $w={41}>Edit</MenuItem>
      <MenuItem $w={73}>Navigate</MenuItem>
      <MenuItem $w={67}>Window</MenuItem>
      <MenuItem $w={40}>Help</MenuItem>
    </MenuBar>
    <Body>
      <Rail>
        <Grip $mt={2} />
        <RailItem $mt={6}><Icon name="restoreDim" /></RailItem>
        <RailItem $mt={6}><Icon name="tableView" /></RailItem>
        <RailItem $mt={7}><Icon name="glasses" /></RailItem>
        <Grip $mt={7} />
        <RailItem $mt={6}><Icon name="restoreDim" /></RailItem>
        <RailItem $mt={6}><Icon name="sideView" /></RailItem>
      </Rail>
      <SidePanel>
        <Strip $bg="#e8e6e3">
          <Tab $w={108}>
            <Icon name="rocket" />
            <TabText>JVM Browser</TabText>
          </Tab>
          <Tab $w={75} $bg="#f6f5f3" $active>
            <Icon name="outline" />
            <TabText>Outline</TabText>
          </Tab>
          <StripTools $pr={10}>
            <Slot $dy={1}><Icon name="lockTree" /></Slot>
            <Slot $ml={6}><Icon name="back" /></Slot>
            <Slot $ml={12}><Icon name="dots" /></Slot>
            <Slot $ml={13}><Icon name="min" /></Slot>
            <Slot $ml={5}><Icon name="restore" /></Slot>
          </StripTools>
        </Strip>
        <Tree>
          {treeItems.map(([depth, icon, label, state], i) => (
            <TreeRow key={i} $depth={depth} $selected={state === "selected"}>
              <Twisty>{(state === "open" || state === "closed") && <Icon name={state} />}</Twisty>
              <Icon name={icon} />
              <TreeLabel>{label}</TreeLabel>
            </TreeRow>
          ))}
        </Tree>
      </SidePanel>
      <Main>
        <EditorPanel>
          <Strip $bg="#e1dedb">
            <Tab $w={128} $bg="#fff" $active>
              <Icon name="flame" />
              <TabText>Flame Graph</TabText>
              <Icon name="close" />
            </Tab>
            <StripTools $pr={4}>
              <Slot><Icon name="min" /></Slot>
              <Slot $ml={6}><Icon name="max" /></Slot>
            </StripTools>
          </Strip>
          <ToolBar $bg="#fff">
            <Slot><Icon name="undo" /></Slot>
            <Slot $ml={7}><Icon name="map" /></Slot>
            <Sep $ml={6} />
            <ToggleButton $ml={5} $bg="#e3e3e3"><Icon name="flameUp" /></ToggleButton>
            <Slot $ml={6}><Icon name="flameDown" /></Slot>
            <Sep $ml={5} />
            <Slot $ml={6}><Icon name="greenM" /></Slot>
            <ToggleButton $ml={5} $bg="#e3e3e3"><Icon name="playGear" /></ToggleButton>
            <Sep $ml={5} />
            <Slot $ml={7}><Icon name="save" /></Slot>
            <Sep $ml={5} />
            <ToolText $ml={31}>Samples</ToolText>
            <Slot $ml={12}><Icon name="caret" /></Slot>
            <Slot $ml={13}><Icon name="dots" /></Slot>
            <Slot $w={1} />
          </ToolBar>
          <FlameView>
            <SearchRow>
              <SearchLabel>Search:</SearchLabel>
              <SearchField />
            </SearchRow>
            <ScrollPane>
              <Viewport>
                <FlameGrid>
                  {columns.map((c) =>
                    c.frames.map(([row, label, bg]) => (
                      <Frame
                        key={`${c.from}-${row}`}
                        $row={row}
                        $from={c.from}
                        $to={c.to}
                        $bg={bg}
                        $dark={darkText.has(bg)}
                        $track={tracking(label)}
                      >
                        {label}
                      </Frame>
                    ))
                  )}
                </FlameGrid>
                <ScrollHint>
                  <Tri width="13" height="9" viewBox="0 0 13 9">
                    <path d="M1.5 1.5L6.5 6.5L11.5 1.5" stroke="#333" strokeWidth="2.8" fill="none" />
                  </Tri>
                </ScrollHint>
              </Viewport>
              <VBar>
                <ArrowButton $w={17} $h={16}>
                  <Tri width="8" height="4" viewBox="0 0 8 4"><path d="M0 4L4 0L8 4Z" fill="#222" /></Tri>
                </ArrowButton>
                <Track $len={120} $vertical />
                <Thumb $len={905} $vertical><i /><i /><i /></Thumb>
                <Track $len={15} $vertical />
                <ArrowButton $w={17} $h={16}>
                  <Tri width="8" height="4" viewBox="0 0 8 4"><path d="M0 0L4 4L8 0Z" fill="#222" /></Tri>
                </ArrowButton>
              </VBar>
              <HBar>
                <ArrowButton $w={16} $h={15}>
                  <Tri width="4" height="8" viewBox="0 0 4 8"><path d="M4 0L0 4L4 8Z" fill="#222" /></Tri>
                </ArrowButton>
                <Track $len={1641} />
                <Thumb $len={496}><i /><i /><i /></Thumb>
                <ArrowButton $w={15} $h={15}>
                  <Tri width="4" height="8" viewBox="0 0 4 8"><path d="M0 0L4 4L0 8Z" fill="#222" /></Tri>
                </ArrowButton>
              </HBar>
            </ScrollPane>
          </FlameView>
        </EditorPanel>
        <TracePanel>
          <Strip $bg="#e8e6e3">
            <Tab $w={98} $bg="#f6f5f3" $active>
              <Icon name="lines" />
              <TabText>Stack Trace</TabText>
            </Tab>
            <StripTools $pr={4}>
              <Slot><Icon name="min" /></Slot>
              <Slot $ml={6}><Icon name="max" /></Slot>
            </StripTools>
          </Strip>
          <ToolBar $bg="#f6f5f3">
            <Slot><Icon name="branchNew" /></Slot>
            <Slot $ml={5}><Icon name="branchLeft" /></Slot>
            <Slot $ml={7}><Icon name="branchRight" /></Slot>
            <Sep $ml={5} />
            <ToggleButton $ml={5} $bg="#dcdbd9"><Icon name="treeView" /></ToggleButton>
            <Sep $ml={5} />
            <Slot $ml={6}><Icon name="clock" /></Slot>
            <ToggleButton $ml={5} $bg="#dcdbd9"><Icon name="greenM" /></ToggleButton>
            <Slot $ml={5}><Icon name="playGear" /></Slot>
            <Sep $ml={6} />
            <ToolText $ml={31}>Samples</ToolText>
            <Slot $ml={12}><Icon name="caret" /></Slot>
            <Slot $ml={13}><Icon name="dots" /></Slot>
            <Slot $w={1} />
          </ToolBar>
          <Table>
            <TableHead>
              <HeadCell>Stack Trace</HeadCell>
              <HeadCell $right>Samples</HeadCell>
              <HeadCell $right $last>Percentage</HeadCell>
            </TableHead>
          </Table>
        </TracePanel>
        <StatusBar>
          <StatusGrip />
        </StatusBar>
      </Main>
    </Body>
  </Window>
);

export default App;
